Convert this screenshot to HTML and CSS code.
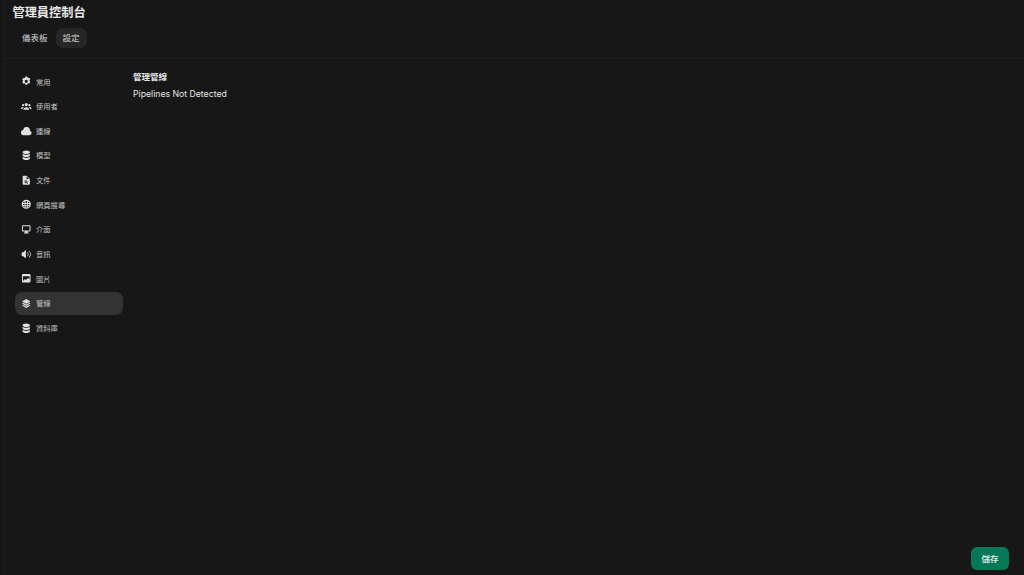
FILE: index.html

```html
<!DOCTYPE html>
<html lang="zh-Hant">
<head>
  <meta charset="UTF-8">
  <meta name="viewport" content="width=device-width, initial-scale=1.0">
  <title>管理員控制台</title>
  <link rel="stylesheet" href="styles.css">
</head>
<body>
  <div class="page">
    <header class="top">
      <h1>管理員控制台</h1>
      <nav class="tabs">
        <a class="tab">儀表板</a>
        <a class="tab active">設定</a>
      </nav>
    </header>
    <hr class="divider">
    <div class="main">
      <aside class="side">
        <a class="item">
          <svg viewBox="0 0 20 20"><path fill-rule="evenodd" d="M7.84 1.8A1 1 0 0 1 8.82 1h2.36a1 1 0 0 1 .98.8l.25 1.25c.5.2.96.47 1.38.8l1.2-.41a1 1 0 0 1 1.19.45l1.18 2.04a1 1 0 0 1-.2 1.25l-.96.84a6.6 6.6 0 0 1 0 1.56l.96.84a1 1 0 0 1 .2 1.25l-1.18 2.04a1 1 0 0 1-1.19.45l-1.2-.41c-.42.33-.88.6-1.38.8l-.25 1.25a1 1 0 0 1-.98.8H8.82a1 1 0 0 1-.98-.8l-.25-1.25a6 6 0 0 1-1.38-.8l-1.2.41a1 1 0 0 1-1.19-.45l-1.18-2.04a1 1 0 0 1 .2-1.25l.96-.84a6.6 6.6 0 0 1 0-1.56l-.96-.84a1 1 0 0 1-.2-1.25L3.82 4.34a1 1 0 0 1 1.19-.45l1.2.41c.42-.33.88-.6 1.38-.8l.25-1.7ZM10 13a3 3 0 1 0 0-6 3 3 0 0 0 0 6Z"/></svg>
          <span>常用</span>
        </a>
        <a class="item">
          <svg viewBox="0 0 16 16"><path d="M8 8a2.500 2.500 0 1 0 0-5 2.500 2.500 0 0 0 0 5ZM3.200 8a1.700 1.700 0 1 0 0-3.400 1.700 1.700 0 0 0 0 3.400ZM12.800 8a1.700 1.700 0 1 0 0-3.400 1.700 1.700 0 0 0 0 3.400ZM4 13.500c-.4 0-.6-.3-.5-.7C3.900 10.900 5.800 9.500 8 9.500s4.100 1.400 4.500 3.300c.1.400-.1.700-.5.700H4ZM2.500 9c-1.200 0-2.200.9-2.500 2.200-.1.500.2.800.6.800h1.700c.3-1 .8-2 1.600-2.600C3.500 9.100 2.900 9 2.500 9ZM13.500 9c1.200 0 2.200.9 2.500 2.200.1.500-.2.800-.6.800h-1.700c-.3-1-.8-2-1.600-2.600.4-.3 1-.4 1.400-.4Z"/></svg>
          <span>使用者</span>
        </a>
        <a class="item">
          <svg viewBox="0 0 16 16"><path d="M0 10.500A3.500 3.500 0 0 0 3.500 14h9a3.500 3.500 0 0 0 1-6.860A5 5 0 0 0 3.400 6.100 3.500 3.500 0 0 0 0 10.500Z"/></svg>
          <span>連線</span>
        </a>
        <a class="item">
          <svg viewBox="0 0 20 20"><path d="M10 1c3.870 0 7 1.570 7 3.500S13.870 8 10 8 3 6.430 3 4.500 6.130 1 10 1Z"/><path d="M3 7.300V10c0 1.930 3.130 3.500 7 3.500s7-1.570 7-3.500V7.300C15.500 8.700 12.900 9.500 10 9.500S4.500 8.700 3 7.300Z"/><path d="M3 12.800v2.700c0 1.930 3.130 3.500 7 3.500s7-1.570 7-3.500v-2.700c-1.500 1.400-4.100 2.200-7 2.200s-5.500-.8-7-2.200Z"/></svg>
          <span>模型</span>
        </a>
        <a class="item">
          <svg viewBox="0 0 16 16"><path fill-rule="evenodd" d="M4 1A1.500 1.500 0 0 0 2.500 2.500v11A1.500 1.500 0 0 0 4 15h8a1.500 1.500 0 0 0 1.500-1.500V6L8.500 1H4Zm4.500 1.300V6h3.700L8.500 2.300ZM7.500 8a2.200 2.200 0 0 1 1.900 3.300l1.300 1.300-.8.8-1.300-1.300A2.200 2.200 0 1 1 7.500 8Zm0 1.100a1.100 1.100 0 1 0 0 2.200 1.100 1.100 0 0 0 0-2.200Z"/></svg>
          <span>文件</span>
        </a>
        <a class="item">
          <svg viewBox="0 0 16 16"><path fill-rule="evenodd" d="M8 1a7 7 0 1 0 0 14A7 7 0 0 0 8 1ZM4 3.800l1.500.7v1.700H3.300A5 5 0 0 1 4 3.800Zm3-.7h2v3.100H7V3.100Zm3.500 1.400L12 3.800a5 5 0 0 1 .7 2.400h-2.200V4.500ZM3.300 7.700h2.200v2H3.300v-2Zm3.700 0h2v2H7v-2Zm3.500 0h2.200v2h-2.200v-2Zm-7 3.500h2v1.300l-1 .4a5 5 0 0 1-1-1.700Zm3.500 0h2v1.700H7v-1.700Zm3.500 0h2a5 5 0 0 1-1 1.700l-1-.4v-1.300Z"/></svg>
          <span>網頁搜尋</span>
        </a>
        <a class="item">
          <svg viewBox="0 0 16 16"><path fill-rule="evenodd" d="M1.500 3.500A1.500 1.500 0 0 1 3 2h10a1.500 1.500 0 0 1 1.500 1.500v6.500A1.500 1.500 0 0 1 13 11.500h-3v1.500h1.500v1.500h-7V13H6v-1.500H3A1.500 1.500 0 0 1 1.500 10V3.500Zm1.500 0v6.500h10V3.500H3Z"/></svg>
          <span>介面</span>
        </a>
        <a class="item">
          <svg viewBox="0 0 16 16"><path d="M7.500 2.500v11c0 .5-.6.800-1 .4L3.500 11H2a1 1 0 0 1-1-1V6a1 1 0 0 1 1-1h1.500l3-2.900c.4-.4 1-.1 1 .4Z"/><path d="M10 4.500c1 .8 1.500 2.100 1.500 3.500s-.5 2.700-1.500 3.500l-.7-.8c.7-.6 1.100-1.600 1.100-2.700s-.4-2.100-1.100-2.700l.7-.8ZM12.500 2.800c1.500 1.300 2.500 3.100 2.500 5.200s-1 3.900-2.500 5.200l-.7-.8c1.300-1.100 2.100-2.700 2.100-4.400s-.8-3.300-2.100-4.400l.7-.8Z"/></svg>
          <span>音訊</span>
        </a>
        <a class="item">
          <svg viewBox="0 0 16 16"><path fill-rule="evenodd" d="M3 1.500A1.500 1.500 0 0 0 1.500 3v10A1.500 1.500 0 0 0 3 14.500h10a1.500 1.500 0 0 0 1.500-1.500V3A1.500 1.500 0 0 0 13 1.500H3Zm0 3.500h10v4.500l-2.500-2-3 3-1.500-1.500L3 12V5Z"/></svg>
          <span>圖片</span>
        </a>
        <a class="item active">
          <svg viewBox="0 0 20 20"><path d="M10 2 2 6.500l8 4.500 8-4.500L10 2Z"/><path d="m4.200 9.200-2.200 1.300 8 4.500 8-4.500-2.200-1.300-5.800 3.200-5.800-3.200Z"/><path d="m4.200 13.200-2.200 1.300 8 4.500 8-4.500-2.200-1.300-5.800 3.200-5.800-3.200Z"/></svg>
          <span>管線</span>
        </a>
        <a class="item">
          <svg viewBox="0 0 20 20"><path d="M10 1c3.870 0 7 1.570 7 3.500S13.870 8 10 8 3 6.430 3 4.500 6.130 1 10 1Z"/><path d="M3 7.300V10c0 1.930 3.130 3.500 7 3.500s7-1.570 7-3.500V7.300C15.500 8.700 12.900 9.500 10 9.500S4.500 8.700 3 7.300Z"/><path d="M3 12.800v2.700c0 1.930 3.130 3.500 7 3.500s7-1.570 7-3.500v-2.700c-1.500 1.400-4.100 2.200-7 2.200s-5.500-.8-7-2.200Z"/></svg>
          <span>資料庫</span>
        </a>
      </aside>
      <section class="content">
        <h2>管理管線</h2>
        <p>Pipelines Not Detected</p>
      </section>
    </div>
    <button class="save">儲存</button>
  </div>
</body>
</html>
```

FILE: styles.css

```css
html, body {
  height: 100%;
}
body {
  margin: 0;
  background-color: #171717;
  color: #e5e5e5;
  font-family: Inter, "Noto Sans CJK TC", sans-serif;
  overflow: hidden;
}
.page {
  position: relative;
  height: 575px;
  box-sizing: border-box;
  padding-left: 2px;
  border-left: 1px solid #121212;
}
.top {
  padding: 5px 0 0 9.5px;
}
h1 {
  margin: 0;
  font-size: 12.2px;
  line-height: 16px;
  font-weight: 600;
  color: #e8e8e8;
}
.tabs {
  display: flex;
  gap: 1px;
  margin-top: 7px;
  padding-left: 2.5px;
}
.tab {
  padding: 0 7px;
  height: 20px;
  line-height: 20px;
  font-size: 8.5px;
  border-radius: 7px;
  color: #d4d4d4;
}
.tab.active {
  background-color: #262626;
}
.divider {
  margin: 10px 0 0;
  border: 0;
  height: 1px;
  background-color: #1f1f1f;
}
.main {
  display: flex;
  padding: 11px 0 0 12px;
}
.side {
  display: flex;
  flex-direction: column;
  gap: 1.65px;
  width: 108px;
}
.item {
  display: flex;
  align-items: center;
  gap: 4.5px;
  height: 23px;
  padding-left: 6px;
  border-radius: 7px;
  font-size: 7.3px;
  color: #c4c4c4;
}
.item svg {
  width: 10.5px;
  height: 10.5px;
  fill: #e0e0e0;
}
.item.active {
  background-color: #333333;
}
.content {
  margin-left: 10px;
  padding-top: 1px;
}
h2 {
  margin: 0;
  font-size: 8.5px;
  line-height: 12px;
  font-weight: 600;
  color: #e5e5e5;
}
.content p {
  margin: 5px 0 0;
  font-size: 8.7px;
  line-height: 12px;
  color: #e5e5e5;
}
.save {
  position: absolute;
  right: 15px;
  bottom: 5.5px;
  width: 38px;
  height: 22.5px;
  padding: 0;
  border: none;
  border-radius: 6px;
  background-color: #047857;
  color: #e8f2ee;
  font-family: inherit;
  font-size: 8.5px;
  font-weight: 500;
}
```
